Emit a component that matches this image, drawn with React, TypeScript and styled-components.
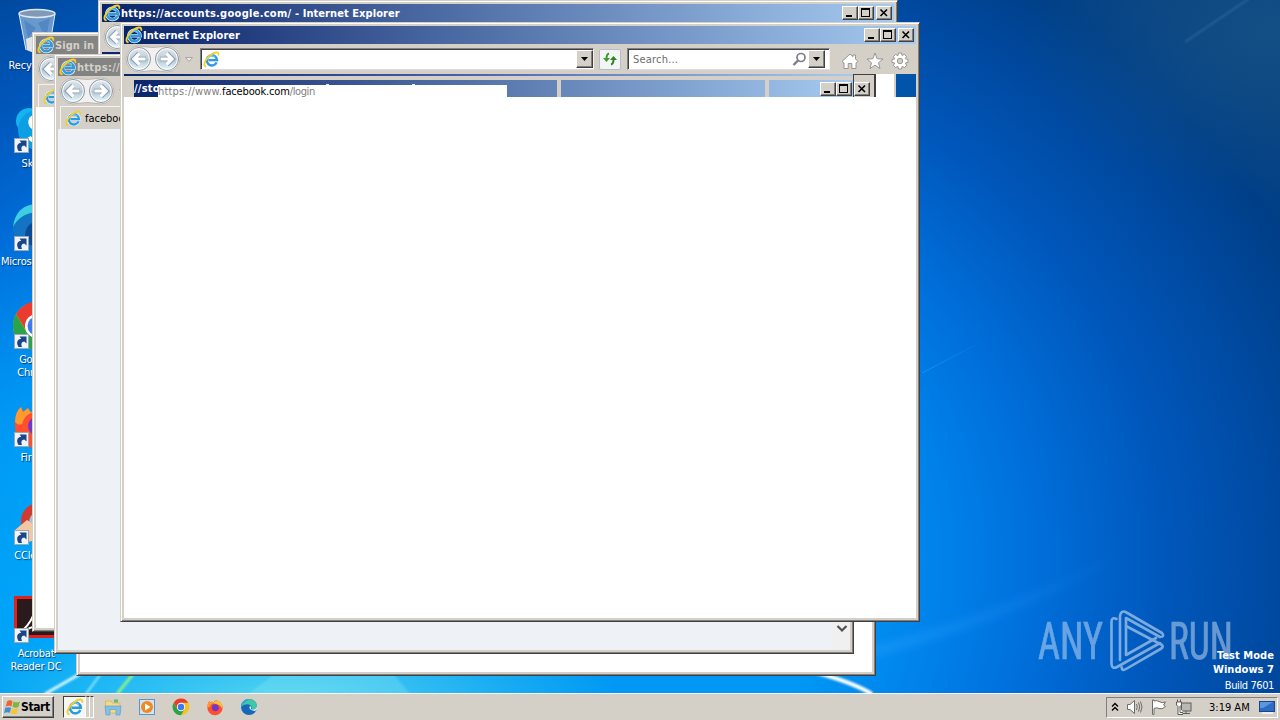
import React, { FC, ReactNode } from "react";
import styled, { createGlobalStyle, css } from "styled-components";

const GlobalStyle = createGlobalStyle`
  body {
    margin: 0;
    overflow: hidden;
  }
  * {
    box-sizing: border-box;
  }
  svg {
    display: block;
    flex: none;
  }
`;

const uiFont = css`
  font-family: "DejaVu Sans Condensed", "DejaVu Sans", sans-serif;
  font-stretch: condensed;
  font-size: 11px;
  line-height: 13px;
  white-space: nowrap;
`;

const raised = css`
  background: #d4d0c8;
  border: 1px solid;
  border-color: #ffffff #404040 #404040 #ffffff;
  box-shadow: inset -1px -1px 0 #808080;
`;

const Screen = styled.div`
  ${uiFont}
  position: relative;
  display: flex;
  flex-direction: column;
  width: 1280px;
  height: 720px;
  overflow: hidden;
  color: #000;
`;

const Desktop = styled.div`
  position: relative;
  height: 693px;
  overflow: hidden;
  background: radial-gradient(
      ellipse 330px 90px at 290px 700px,
      rgba(100, 225, 240, 0.85),
      rgba(60, 200, 240, 0.5) 60%,
      transparent
    ),
    radial-gradient(
      ellipse 330px 400px at 0 640px,
      rgba(0, 185, 255, 0.55),
      rgba(0, 180, 255, 0.4) 55%,
      transparent
    ),
    radial-gradient(
      ellipse 250px 170px at 1270px 30px,
      rgba(40, 100, 140, 0.4),
      transparent
    ),
    radial-gradient(
      ellipse 1000px 800px at 450px 560px,
      #0098f4 38%,
      #0084ec 48%,
      #0070dc 58%,
      #0058bc 71%,
      #0049a0 83%,
      #003f88 92%,
      #064080 100%
    );
`;

const Wallpaper = styled.svg`
  position: absolute;
  inset: 0;
`;

const IconColumn = styled.div`
  position: relative;
  width: 72px;
  padding-top: 8px;
`;

const Shortcut = styled.div`
  display: flex;
  flex-direction: column;
  align-items: center;
  height: 98px;
  color: #fff;
  text-align: center;
  text-shadow: 1px 1px 1px rgba(0, 20, 70, 0.7);
`;

const ShortcutLabel = styled.span`
  margin-top: 3px;
  white-space: pre-line;
  letter-spacing: -0.2px;
`;

const Frame = styled.div<{ $x: number; $y: number }>`
  position: absolute;
  left: ${(p) => p.$x}px;
  top: ${(p) => p.$y}px;
  display: flex;
  flex-direction: column;
  width: 800px;
  height: 600px;
  padding: 3px;
  background: #d4d0c8;
  border: 1px solid;
  border-color: #d4d0c8 #404040 #404040 #d4d0c8;
  box-shadow: inset 1px 1px 0 #fff, inset -1px -1px 0 #808080;
`;

const TitleBar = styled.div<{ $inactive?: boolean }>`
  display: flex;
  flex: none;
  align-items: center;
  height: 18px;
  padding: 0 2px 0 1px;
  font-weight: bold;
  color: ${(p) => (p.$inactive ? "#d4d0c8" : "#fff")};
  background: ${(p) =>
    p.$inactive
      ? "linear-gradient(90deg, #808080, #c0c0c0)"
      : "linear-gradient(90deg, #0a246a, #a6caf0)"};
`;

const TitleText = styled.span`
  flex: 1;
  overflow: hidden;
  letter-spacing: 0.07px;
`;

const TitleUrl = styled.span`
  letter-spacing: 0.28px;
`;

const Buttons = styled.div`
  display: flex;
`;

const Caption = styled.span`
  ${raised}
  display: flex;
  align-items: center;
  justify-content: center;
  width: 16px;
  height: 14px;
  &:nth-child(3) {
    margin-left: 2px;
  }
`;

const NavRow = styled.div`
  display: flex;
  flex: none;
  align-items: center;
  height: 30px;
`;

const NavField = styled.div<{ $width: number; $gap: number; $end?: number }>`
  display: flex;
  align-items: center;
  width: ${(p) => p.$width}px;
  height: 22px;
  margin-left: ${(p) => p.$gap}px;
  padding: 0 ${(p) => p.$end || 0}px 0 2px;
  background: #fff;
  border: 1px solid;
  border-color: #808080 #f4f0ec #e6d8e2 #808080;
  box-shadow: inset 1px 1px 0 #404040;
  color: #6d6d6d;
`;

const FieldText = styled.span`
  flex: 1;
  padding-left: 3px;
  letter-spacing: 0.2px;
`;

const DropButton = styled.span`
  ${raised}
  display: flex;
  align-items: center;
  justify-content: center;
  width: 17px;
  height: 18px;
`;

const RefreshButton = styled.span`
  display: flex;
  align-items: center;
  justify-content: center;
  width: 22px;
  height: 21px;
  margin-left: 5px;
  background: #f2f4f6;
  border: 1px solid #b9bcc6;
  border-radius: 2px;
`;

const Tools = styled.div`
  display: flex;
  gap: 7px;
  margin: 3px 0 0 11px;
`;

const GhostLine = styled.div`
  flex: none;
  width: 729px;
  height: 2px;
  background: linear-gradient(90deg, #0a246a, #4a5cae 45%, #a6caf0);
`;

const GhostRow = styled.div`
  position: relative;
  display: flex;
  flex: none;
  align-items: flex-end;
  height: 21px;
`;

const GhostTitle = styled.div`
  display: flex;
  width: 719px;
  height: 17px;
  margin-left: 10px;
  overflow: hidden;
  background: linear-gradient(90deg, #0a246a, #a6caf0);
  color: #fff;
  font-weight: bold;
  line-height: 17px;
  letter-spacing: 0.2px;
`;

const GhostText = styled.span`
  width: 423px;
`;

const GhostGap = styled.span<{ $after: number }>`
  width: 4px;
  margin-right: ${(p) => p.$after}px;
  background: #d4d0c8;
`;

const GhostButtons = styled.div`
  display: flex;
  margin-top: 2px;
  line-height: 0;
`;

const GhostEdge = styled.div`
  display: flex;
  width: 23px;
  height: 23px;
  padding-top: 7px;
  background: #d4d0c8;
  border: solid #404040;
  border-width: 1px 2px 0 1px;
`;

const GhostStrip = styled.div<{ $width: number; $color: string }>`
  width: ${(p) => p.$width}px;
  height: 23px;
  background: ${(p) => p.$color};
`;

const UrlGhost = styled.div`
  position: absolute;
  left: 34px;
  top: 9px;
  width: 349px;
  height: 14px;
  background: #fff;
  color: #808080;
  line-height: 14px;
`;

const UrlPart = styled.span<{ $spacing: number; $dark?: boolean }>`
  color: ${(p) => (p.$dark ? "#000" : "inherit")};
  letter-spacing: ${(p) => p.$spacing}px;
`;

const Speck = styled.span<{ $x: number }>`
  position: absolute;
  left: ${(p) => p.$x}px;
  top: -1px;
  width: 3px;
  height: 1px;
  background: #e8ecf6;
`;

const Body = styled.div<{ $color?: string }>`
  display: flex;
  flex: 1;
  justify-content: flex-end;
  background: ${(p) => p.$color || "#fff"};
`;

const ScrollBar = styled.div`
  display: flex;
  align-items: flex-end;
  justify-content: center;
  width: 17px;
  padding-bottom: 17px;
  background: #f0f0f0;
`;

const TabRow = styled.div<{ $height: number }>`
  display: flex;
  flex: none;
  height: ${(p) => p.$height}px;
  padding-left: 2px;
`;

const Tab = styled.div`
  display: flex;
  align-items: center;
  gap: 3px;
  width: 190px;
  padding-left: 4px;
  border: 1px solid #f4f2ee;
  border-right-color: #808080;
  border-bottom: 0;
`;

const Watermark = styled.svg`
  position: absolute;
  left: 1036px;
  top: 606px;
`;

const BuildInfo = styled.div`
  position: absolute;
  right: 6px;
  top: 649px;
  display: flex;
  flex-direction: column;
  align-items: flex-end;
  color: #fff;
`;

const BuildLine = styled.span<{ $bold?: boolean }>`
  height: ${(p) => (p.$bold ? 14 : 13)}px;
  font-weight: ${(p) => (p.$bold ? "bold" : "normal")};
  letter-spacing: ${(p) => (p.$bold ? 0.05 : -0.4)}px;
  &:last-child {
    margin-top: 2px;
  }
`;

const TaskBar = styled.div`
  display: flex;
  align-items: center;
  height: 27px;
  padding: 0 2px;
  background: #d4d0c8;
  border-top: 1px solid #fff;
`;

const StartButton = styled.div`
  ${raised}
  display: flex;
  align-items: center;
  width: 52px;
  height: 22px;
  padding-left: 1px;
  font-weight: bold;
  font-size: 12px;
  letter-spacing: -0.4px;
`;

const ActiveTask = styled.div`
  display: flex;
  align-items: center;
  width: 23px;
  height: 22px;
  margin-left: 9px;
  padding-left: 2px;
  background: #f8f6f3;
  border: 1px solid;
  border-color: #404040 #fff #fff #404040;
`;

const StackEdge = styled.div`
  width: 4px;
  height: 22px;
  border: 1px solid;
  border-color: #404040 #fff #fff #d4d0c8;
`;

const Launchers = styled.div`
  display: flex;
  gap: 16px;
  margin-left: 10px;
`;

const Tray = styled.div`
  display: flex;
  align-items: center;
  width: 172px;
  height: 21px;
  margin-left: auto;
  padding: 0 1px 0 4px;
  border: 1px solid;
  border-color: #808080 #fff #fff #808080;
`;

const TrayIcons = styled.div`
  display: flex;
  align-items: center;
  gap: 8px;
`;

const Clock = styled.span`
  flex: 1;
  padding-left: 17px;
`;

const IeIcon: FC<{ size?: number }> = ({ size = 18 }) => (
  <svg width={size} height={size} viewBox="0 0 18 18" fill="none">
    <path
      d="M14.6 12A5.6 5.6 0 1 1 15 9.7H5.8"
      stroke="#eaf7ff"
      strokeWidth="3.4"
    />
    <path
      d="M14.4 12A5.4 5.4 0 1 1 14.8 9.7H5.8"
      stroke="#2e9be0"
      strokeWidth="2.5"
    />
    <path
      d="M4.6 9A4.8 4.8 0 0 1 13 6.6"
      stroke="#7fd0f8"
      strokeWidth="1"
    />
    <path
      d="M2.8 16.2C-.5 15 2.7 8.3 8 4.3C12.3 1 16.8 .3 16.3 4"
      stroke="#f2cf2a"
      strokeWidth="1.9"
      strokeLinecap="round"
    />
  </svg>
);

const NavButtons: FC = () => (
  <svg width="76" height="30" viewBox="0 0 76 30">
    <defs>
      <linearGradient id="orb" x1="0" y1="0" x2="0" y2="1">
        <stop offset="0" stopColor="#e4e8ec" />
        <stop offset="0.48" stopColor="#c0ced8" />
        <stop offset="0.52" stopColor="#aec4d2" />
        <stop offset="1" stopColor="#eefbff" />
      </linearGradient>
    </defs>
    <path
      d="M15 2Q29 5 43 2A13 13 0 0 1 43 28Q29 25 15 28A13 13 0 0 1 15 2"
      fill="#f2f1ef"
      stroke="#bbb8b2"
      strokeWidth="1"
    />
    {[15, 43].map((x) => (
      <g key={x}>
        <circle cx={x} cy="15" r="11.5" fill="url(#orb)" stroke="#8e999f" />
        <circle cx={x} cy="15" r="10.3" fill="none" stroke="#f8fcff" />
      </g>
    ))}
    <g fill="none" stroke="#8b9faf" strokeWidth="4.6">
      <path d="M22 15H10M15 9.5L9.5 15L15 20.5" />
      <path d="M36 15H48M43 9.5L48.5 15L43 20.5" />
    </g>
    <g fill="none" stroke="#fff" strokeWidth="3.2">
      <path d="M21.5 15H10M15.5 9.5L10 15L15.5 20.5" />
      <path d="M36.5 15H48M42.5 9.5L48 15L42.5 20.5" />
    </g>
    <path d="M61.5 13.5H68.5L65 17.5Z" fill="#eceae6" stroke="#aaa8a4" />
  </svg>
);

const DownArrow: FC = () => (
  <svg width="7" height="4" viewBox="0 0 7 4">
    <path d="M0 0H7L3.5 4Z" fill="#000" />
  </svg>
);

const CaptionIcon: FC<{ kind: "min" | "max" | "close" }> = ({ kind }) => (
  <svg
    width="10"
    height="10"
    viewBox="0 0 10 10"
    stroke="#000"
    fill="none"
    shapeRendering="crispEdges"
  >
    {kind === "min" && <path d="M1 8H7" strokeWidth="2" />}
    {kind === "max" && (
      <>
        <path d="M0 1H9" strokeWidth="2" />
        <path d="M.5 0V8.5H8.5V0" />
      </>
    )}
    {kind === "close" && (
      <path
        d="M1.5 1.5L8 8M8 1.5L1.5 8"
        strokeWidth="1.6"
        shapeRendering="auto"
      />
    )}
  </svg>
);

const CaptionButtons: FC<{ noClose?: boolean }> = ({ noClose }) => (
  <Buttons>
    <Caption>
      <CaptionIcon kind="min" />
    </Caption>
    <Caption>
      <CaptionIcon kind="max" />
    </Caption>
    {!noClose && (
      <Caption>
        <CaptionIcon kind="close" />
      </Caption>
    )}
  </Buttons>
);

interface ExplorerProps {
  x: number;
  y: number;
  title?: ReactNode;
  inactive?: boolean;
  nav?: ReactNode;
  children?: ReactNode;
}

const Explorer: FC<ExplorerProps> = (props) => (
  <Frame $x={props.x} $y={props.y}>
    <TitleBar $inactive={props.inactive}>
      <IeIcon />
      <TitleText>{props.title}</TitleText>
      <CaptionButtons />
    </TitleBar>
    <NavRow>
      <NavButtons />
      {props.nav}
    </NavRow>
    {props.children}
  </Frame>
);

const ShortcutArrow: FC = () => (
  <g>
    <rect x="2.5" y="32.5" width="14" height="14" fill="#eef4fa" stroke="#9aa8b5" />
    <path
      d="M6.500 45C3.800 40.500 5.500 37 9.300 36.800L7.500 34.500H14.500V41.500L12.300 39.600C9.500 40 8.800 42 10 45Z"
      fill="#1c4488"
    />
  </g>
);

const RecycleArt: FC = () => (
  <g>
    <path d="M7 5H43L37 42Q25 48 14 42Z" fill="#8fb2d8" opacity="0.75" />
    <path d="M12 12L24 20L16 30ZM26 15L38 10L34 30ZM17 34L33 26L33 40L20 42Z" fill="#4d83c0" opacity="0.8" />
    <path d="M14 31L22 28L28 35L35 33L35 42Q25 47 15 42Z" fill="#e3e6e4" />
    <ellipse cx="25" cy="5.500" rx="18" ry="4" fill="#8099b5" stroke="#dce9f4" strokeWidth="1.500" />
    <path d="M7 6L14 42M43 6L37 42" stroke="#dcecf8" fill="none" />
  </g>
);

const SkypeArt: FC = () => (
  <g>
    <circle cx="17" cy="15" r="13" fill="#16b4ee" />
    <circle cx="26" cy="24" r="20" fill="#0d9fe4" />
    <path d="M33 13Q25 7 19 13Q16 21 26 23Q35 27 29 34Q21 37 17 31" stroke="#fff" strokeWidth="4" fill="none" />
  </g>
);

const EdgeArt: FC = () => (
  <g>
    <circle cx="25" cy="24" r="24" fill="#1474c4" />
    <path d="M1 23Q4 0 26 0Q46 1 49 21Q40 8 26 8Q8 9 1 23Z" fill="#3ccfe4" />
    <path d="M14 38Q10 21 25 17Q18 28 28 40Q20 44 14 38Z" fill="#0b4a94" />
  </g>
);

const ChromeArt: FC = () => (
  <g>
    <circle cx="25" cy="24" r="24" fill="#f6c31c" />
    <path d="M4 12A24 24 0 0 1 46 12H25A12 12 0 0 0 15 30Z" fill="#ea3b2e" />
    <path d="M4 12A24 24 0 0 0 25 48L34 32Q20 38 14 29Z" fill="#2ba24c" />
    <circle cx="25" cy="24" r="12" fill="#fff" />
    <circle cx="25" cy="24" r="9.500" fill="#3f7bee" />
  </g>
);

const FirefoxArt: FC = () => (
  <g>
    <path d="M3 24Q3 12 9 7L11 12L16 8L19 13Q25 2 32 5Q48 13 47 28A22 22 0 0 1 3 24Z" fill="#ff4f2e" />
    <path d="M3 22Q3 12 9 7L11 12L16 8L19 13Q12 16 10 24Q6 26 3 22Z" fill="#ff9a2e" />
    <circle cx="26" cy="26" r="10" fill="#7038c8" />
    <path d="M19 13Q27 2 34 6Q48 14 46 30Q42 16 19 13Z" fill="#ffc02e" />
  </g>
);

const CCleanerArt: FC = () => (
  <g>
    <circle cx="27" cy="23" r="18" fill="#d23a30" />
    <circle cx="30" cy="25" r="13" fill="#9dc4d8" />
    <path d="M3 32L15 22L24 28V42L8 46Z" fill="#f0c8a4" />
  </g>
);

const AcrobatArt: FC = () => (
  <g>
    <rect x="3.500" y="1.500" width="44" height="39" fill="#2a1a1c" stroke="#e2211c" strokeWidth="3" />
    <path d="M11 34Q20 26 24 12Q28 28 40 28Q26 28 13 34" fill="none" stroke="#fff" strokeWidth="2" />
  </g>
);

const LauncherIcon: FC<{ children: ReactNode }> = ({ children }) => (
  <svg width="18" height="18" viewBox="0 -2 50 52">
    {children}
  </svg>
);

const shortcuts = [
  { label: "Recycle Bin", art: <RecycleArt /> },
  { label: "Skype", art: <SkypeArt /> },
  { label: "Microsoft Edge", art: <EdgeArt /> },
  { label: "Google\nChrome", art: <ChromeArt /> },
  { label: "Firefox", art: <FirefoxArt /> },
  { label: "CCleaner", art: <CCleanerArt /> },
  { label: "Acrobat\nReader DC", art: <AcrobatArt /> },
];

const frontNav = (
  <>
    <NavField $width={394} $gap={0}>
      <IeIcon size={17} />
      <FieldText />
      <DropButton>
        <DownArrow />
      </DropButton>
    </NavField>
    <RefreshButton>
      <svg width="16" height="16" viewBox="0 0 16 16" fill="none">
        <path d="M7 2.500Q4.500 3 4.500 8" stroke="#3e9b2c" strokeWidth="2" />
        <path d="M1 7H8L4.500 11Z" fill="#3e9b2c" />
        <path d="M9 13.500Q11.500 13 11.500 8" stroke="#2f8522" strokeWidth="2" />
        <path d="M8 9H15L11.500 5Z" fill="#2f8522" />
      </svg>
    </RefreshButton>
    <NavField $width={203} $gap={6} $end={4}>
      <FieldText>Search...</FieldText>
      <svg width="16" height="15" viewBox="0 0 16 15" fill="none" stroke="#7b7f86">
        <circle cx="9" cy="5.500" r="4" strokeWidth="1.700" />
        <path d="M6 8.500L1.500 13" strokeWidth="2.400" />
      </svg>
      <DropButton>
        <DownArrow />
      </DropButton>
    </NavField>
    <Tools>
      <svg width="18" height="18" viewBox="0 0 18 18">
        <path d="M1 9.500L9 2L12 4.700V3H14.500V7L17 9.500L15 11V16.500H10.800V11.500H7.200V16.500H3V11Z" fill="#fff" stroke="#989692" />
      </svg>
      <svg width="18" height="18" viewBox="0 0 18 18">
        <path d="M9 1L11.200 6.800L17 7L12.500 10.700L14 16.500L9 13.200L4 16.500L5.500 10.700L1 7L6.800 6.800Z" fill="#fff" stroke="#989692" />
      </svg>
      <svg width="18" height="18" viewBox="0 0 18 18">
        <g stroke="#989692">
          <path
            d="M7.500 1H10.500L11 3.500L13.200 2.300L15.500 4.500L14.300 6.700L17 7.500V10.500L14.400 11L15.700 13.300L13.500 15.600L11.200 14.300L10.500 17H7.500L6.900 14.300L4.600 15.600L2.400 13.300L3.700 11L1 10.500V7.500L3.700 6.900L2.400 4.600L4.600 2.400L6.900 3.700Z"
            fill="#fff"
          />
          <circle cx="9" cy="9" r="2.700" fill="#d4d0c8" />
        </g>
      </svg>
    </Tools>
  </>
);

const App: FC = () => {
  return (
    <Screen>
      <GlobalStyle />
      <Desktop>
        <Wallpaper width="1280" height="693" viewBox="0 0 1280 693" fill="none">
          <defs>
            <filter id="soft">
              <feGaussianBlur stdDeviation="1.2" />
            </filter>
            <filter id="haze" x="-20%" y="-20%" width="140%" height="140%">
              <feGaussianBlur stdDeviation="5" />
            </filter>
            <linearGradient id="beam" x1="0" x2="1" y1="0" y2="0">
              <stop offset="0" stopColor="#38a8ff" />
              <stop offset="1" stopColor="#38a8ff" stopOpacity="0" />
            </linearGradient>
          </defs>
          <path d="M45 694L85 671" stroke="#d8f8ff" strokeWidth="3" filter="url(#soft)" />
          <path d="M86 694L100 675" stroke="#90e8ff" strokeWidth="2" filter="url(#soft)" />
          <path d="M117 694L134 673" stroke="#8cf08c" strokeWidth="3" filter="url(#soft)" />
          <path d="M240 700L280 670H390L415 700Z" fill="#8be8f5" opacity="0.3" filter="url(#soft)" />
          <path d="M810 671Q850 681 872 694" stroke="#fff" strokeWidth="4" filter="url(#soft)" />
          <path d="M870 652Q1000 620 1120 555" stroke="url(#beam)" strokeWidth="9" opacity="0.4" filter="url(#haze)" />
          <path d="M922 373L985 340" stroke="url(#beam)" opacity="0.5" />
          <path d="M1185 42L1250 -2" stroke="#6fa4d0" strokeWidth="1.500" opacity="0.35" filter="url(#soft)" />
        </Wallpaper>

        <IconColumn>
          {shortcuts.map((item, i) => (
            <Shortcut key={item.label}>
              <svg width="48" height="48" viewBox="0 0 48 48">
                {item.art}
                {i > 0 && <ShortcutArrow />}
              </svg>
              <ShortcutLabel>{item.label}</ShortcutLabel>
            </Shortcut>
          ))}
        </IconColumn>

        <Watermark width="220" height="70" viewBox="0 0 220 70">
          <g
            opacity="0.5"
            fill="#cfe0f4"
            stroke="#cfe0f4"
            strokeWidth="0.7"
            fontFamily="Roboto, sans-serif"
            fontSize="52"
          >
            <text x="2" y="53" textLength="65" lengthAdjust="spacingAndGlyphs">
              ANY
            </text>
            <text x="133" y="53" textLength="64" lengthAdjust="spacingAndGlyphs">
              RUN
            </text>
          </g>
          <g
            opacity="0.6"
            fill="none"
            stroke="#cfe0f4"
            strokeWidth="2.600"
            strokeLinejoin="round"
            strokeLinecap="round"
          >
            <path d="M80.500 13Q75.500 10.500 75.500 16V58Q76 63.500 81 61L124 37" />
            <path d="M84 54V10Q85 3.500 90.500 6.500L126 27Q129 31 124 31L90 12V49L120 32" />
            <path d="M90 20L126 39Q128 41 124.500 43L90 63Q86 65.500 85.500 61" />
          </g>
        </Watermark>
        <BuildInfo>
          <BuildLine $bold>Test Mode</BuildLine>
          <BuildLine $bold>Windows 7</BuildLine>
          <BuildLine>Build 7601</BuildLine>
        </BuildInfo>

        <Explorer x={32} y={32} title="Sign in -" inactive>
          <TabRow $height={23}>
            <Tab>
              <IeIcon size={17} />
            </Tab>
          </TabRow>
          <Body />
        </Explorer>
        <Explorer
          x={98}
          y={0}
          title={
            <>
              <TitleUrl>https://accounts.google.com/</TitleUrl> - Internet
              Explorer
            </>
          }
        >
          <GhostLine />
          <Body />
        </Explorer>
        <Explorer x={76} y={76} inactive>
          <Body />
        </Explorer>
        <Explorer x={54} y={54} title={<TitleUrl>https://</TitleUrl>} inactive>
          <TabRow $height={23}>
            <Tab>
              <IeIcon size={17} />
              facebook
            </Tab>
          </TabRow>
          <Body $color="#eef1f5">
            <ScrollBar>
              <svg width="12" height="8" viewBox="0 0 12 8">
                <path d="M1.500 1L6 5.500L10.500 1" fill="none" stroke="#505050" strokeWidth="2.200" />
              </svg>
            </ScrollBar>
          </Body>
        </Explorer>
        <Explorer x={120} y={22} title="Internet Explorer" nav={frontNav}>
          <GhostLine />
          <GhostRow>
            <GhostTitle>
              <GhostText>//sto</GhostText>
              <GhostGap $after={204} />
              <GhostGap $after={51} />
              <GhostButtons>
                <CaptionButtons noClose />
              </GhostButtons>
            </GhostTitle>
            <GhostEdge>
              <Caption>
                <CaptionIcon kind="close" />
              </Caption>
            </GhostEdge>
            <GhostStrip $width={18} $color="#fff" />
            <GhostStrip $width={2} $color="#d4d0c8" />
            <GhostStrip $width={20} $color="#0054aa" />
            <UrlGhost>
              <Speck $x={168} />
              <Speck $x={254} />
              <UrlPart $spacing={0.18}>https://www.</UrlPart>
              <UrlPart $spacing={-0.15} $dark>
                facebook.com
              </UrlPart>
              <UrlPart $spacing={-0.4}>/login</UrlPart>
            </UrlGhost>
          </GhostRow>
          <Body />
        </Explorer>
      </Desktop>

      <TaskBar>
        <StartButton>
          <svg width="17" height="17" viewBox="0 0 16 16">
            <path d="M3 2Q5.500 .5 8 2L7 7Q4.500 5.800 1.500 7.200Z" fill="#ee6433" />
            <path d="M9 2.300Q12 4 15 2.300L13.500 7.500Q11 9 8 7.400Z" fill="#7cb63c" />
            <path d="M1.200 8.300Q4 7 6.700 8.300L5.500 13Q3 12 0 13.300Z" fill="#3f8fd8" />
            <path d="M7.700 8.600Q10.500 10 13.200 8.700L12 13.700Q9 15 6.400 13.400Z" fill="#f7c52f" />
          </svg>
          Start
        </StartButton>
        <ActiveTask>
          <IeIcon />
        </ActiveTask>
        <StackEdge />
        <StackEdge />
        <Launchers>
          <svg width="18" height="18" viewBox="0 0 18 18">
            <path d="M1.500 15V3H7L8.500 5H16V15Z" fill="#f1d98a" stroke="#d9bb62" />
            <rect x="10" y="1.500" width="4" height="3" fill="#6cb86c" />
            <path d="M1 8H17L16 17H12V11.500H6V17H2Z" fill="#86bfe6" stroke="#62a0cf" strokeWidth=".7" />
          </svg>
          <svg width="18" height="18" viewBox="0 0 18 18">
            <rect x="1.500" y="1.500" width="15" height="15" fill="#cfe4f6" stroke="#5d94cc" />
            <circle cx="9" cy="9" r="6" fill="#f08a1c" />
            <path d="M7 5.500L12.500 9L7 12.500Z" fill="#fff" />
          </svg>
          <LauncherIcon>
            <ChromeArt />
          </LauncherIcon>
          <LauncherIcon>
            <FirefoxArt />
          </LauncherIcon>
          <svg width="18" height="18" viewBox="0 0 18 18">
            <circle cx="9" cy="9" r="8" fill="#1767b8" />
            <path d="M1 9Q2 1 9.500 1Q17 2 17 8.500Q16 12 11.500 11.500Q13 8 9 6.500Q4 5.500 1 9Z" fill="#3fc7a8" />
            <path d="M1 9Q2 1 9.500 1Q4 4 1 9Z" fill="#2aa5e0" />
            <path d="M10 8Q7.500 12 15 13Q18 11 17 8.500Q16 12 11.500 11.500Q10.500 10 11.500 9Z" fill="#e2eff4" />
          </svg>
        </Launchers>
        <Tray>
          <TrayIcons>
            <svg width="8" height="10" viewBox="0 0 8 10" fill="none" stroke="#000" strokeWidth="1.400">
              <path d="M1 4.500L4 1.500L7 4.500M1 8.500L4 5.500L7 8.500" />
            </svg>
            <svg width="16" height="16" viewBox="0 0 16 16" fill="#fff" stroke="#6f6d6a">
              <path d="M.5 5.500H3L7.500 1.500V14.500L3 10.500H.5Z" />
              <path d="M9.500 5Q11 8 9.500 11M11.500 3.500Q14 8 11.500 12.500M13.500 2.500Q16.500 8 13.500 13.500" fill="none" />
            </svg>
            <svg width="16" height="16" viewBox="0 0 16 16" fill="#fff" stroke="#6f6d6a">
              <path d="M1.500 1V15.500H3V9.500Q6 8 8 9.500Q11 11 14.500 7.500L12.500 6L14.500 3Q11 4.500 8 2.500Q6 1 3 2V1Z" />
            </svg>
            <svg width="17" height="16" viewBox="0 0 17 16" fill="#fff" stroke="#5f5d5a">
              <rect x="6.500" y="4" width="9.500" height="8" fill="#b9b8b5" />
              <path d="M7 14.500H15M11 12V14.500" />
              <path d="M1.500 3H6.500V6L5 7.500V13.500H8M2.500 3V.5M5.500 3V.5M1.500 3V6L3 7.500V15.500H8" />
            </svg>
          </TrayIcons>
          <Clock>3:19 AM</Clock>
          <svg width="17" height="13" viewBox="0 0 17 13">
            <rect x=".5" y=".5" width="15" height="10" fill="#2d6bc4" stroke="#1d4488" />
            <path d="M1 1H14L4 7H1Z" fill="#5c96de" />
            <path d="M3 12H14" stroke="#eee" strokeWidth="2" />
          </svg>
        </Tray>
      </TaskBar>
    </Screen>
  );
};

export default App;
